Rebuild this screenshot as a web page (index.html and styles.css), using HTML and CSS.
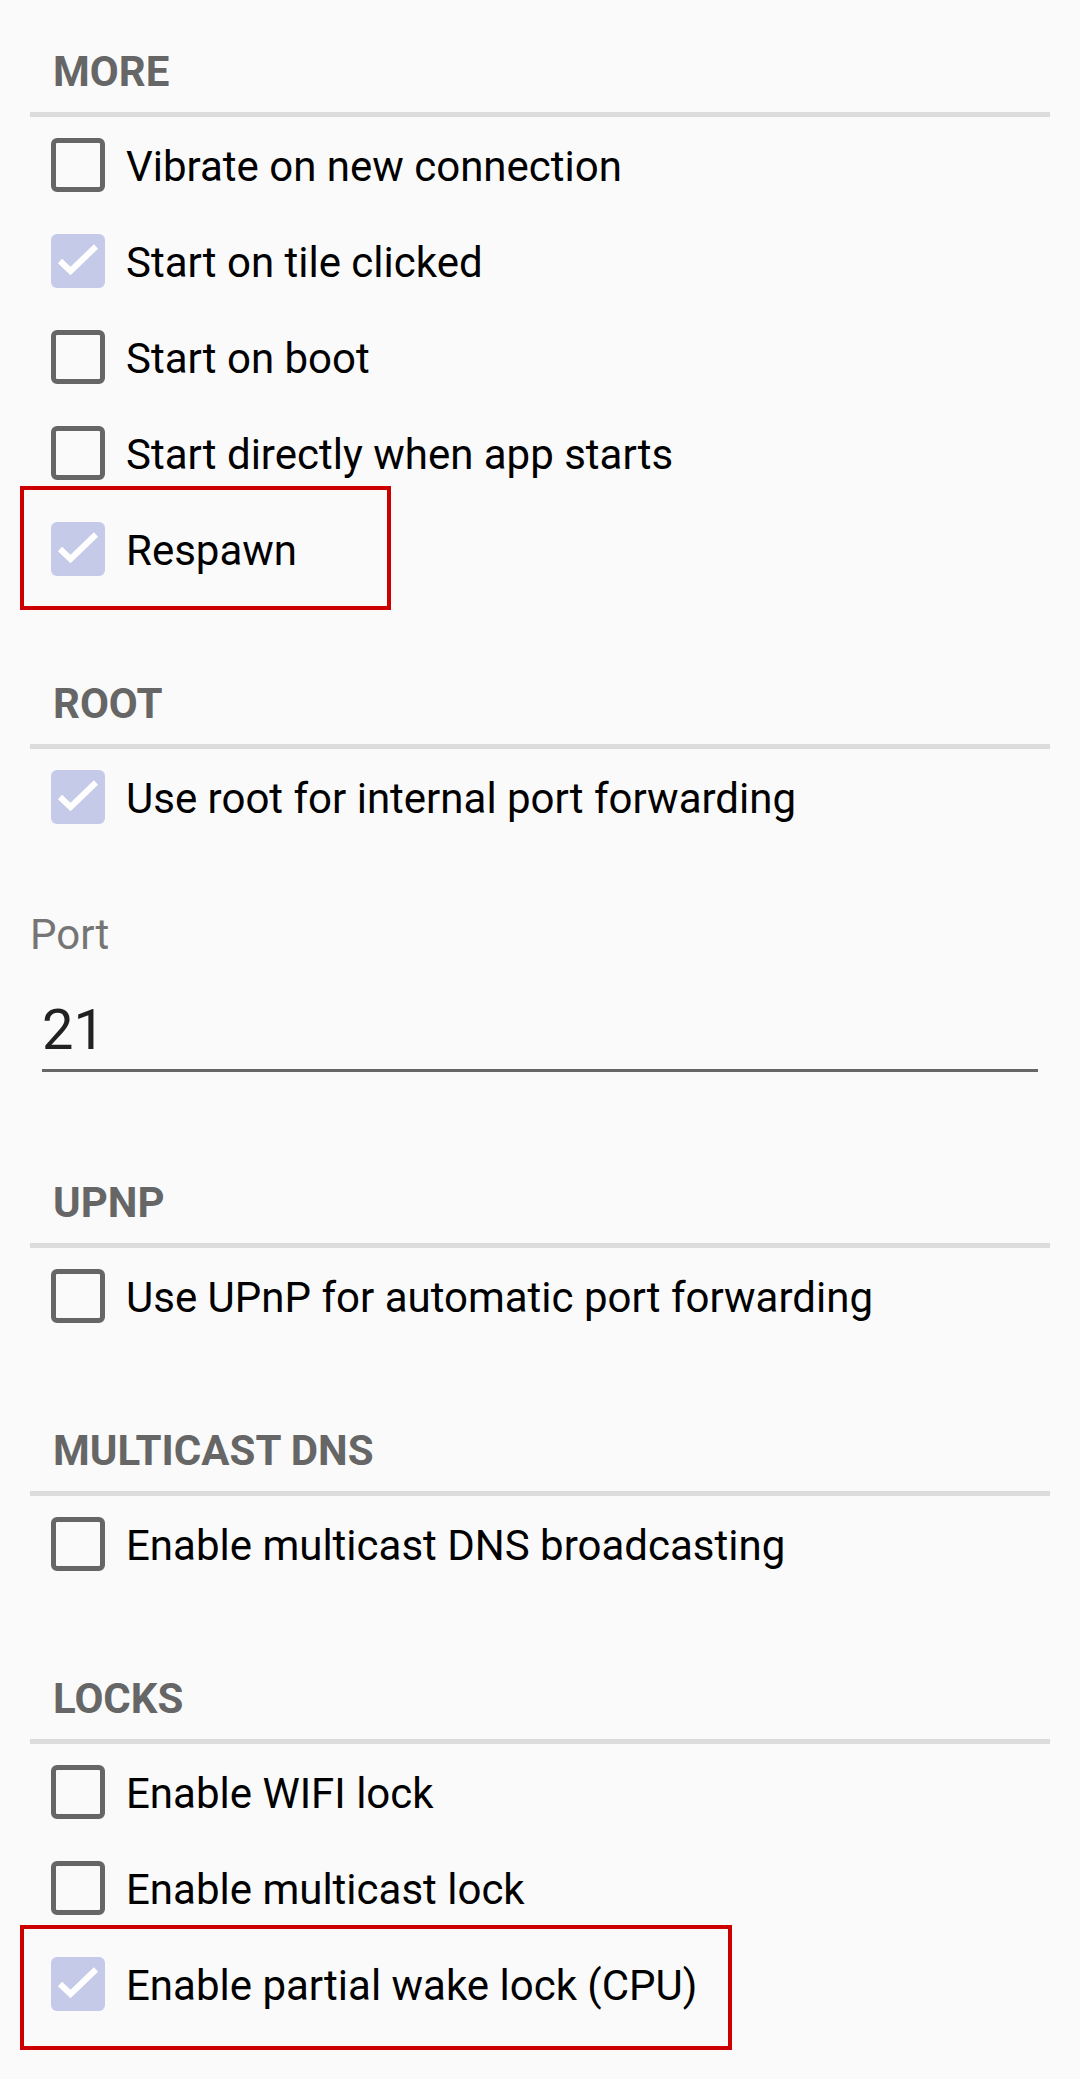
FILE: index.html
```html
<!DOCTYPE html>
<html>
<head>
<meta charset="utf-8">
<link rel="stylesheet" href="styles.css">
</head>
<body>
<div class="page">
  <section class="cat">
    <h2 class="cat-title">MORE</h2>
    <div class="row"><span class="cb"></span><span class="label">Vibrate on new connection</span></div>
    <div class="row"><span class="cb checked"><svg viewBox="0 0 54 54"><polyline points="9,27 19.5,37 45,12.5"/></svg></span><span class="label">Start on tile clicked</span></div>
    <div class="row"><span class="cb"></span><span class="label">Start on boot</span></div>
    <div class="row"><span class="cb"></span><span class="label">Start directly when app starts</span></div>
    <div class="row hl hl-respawn"><span class="cb checked"><svg viewBox="0 0 54 54"><polyline points="9,27 19.5,37 45,12.5"/></svg></span><span class="label">Respawn</span></div>
  </section>
  <section class="cat">
    <h2 class="cat-title">ROOT</h2>
    <div class="row"><span class="cb checked"><svg viewBox="0 0 54 54"><polyline points="9,27 19.5,37 45,12.5"/></svg></span><span class="label">Use root for internal port forwarding</span></div>
    <div class="field">
      <div class="field-label">Port</div>
      <div class="field-input">21</div>
    </div>
  </section>
  <section class="cat">
    <h2 class="cat-title">UPNP</h2>
    <div class="row"><span class="cb"></span><span class="label">Use UPnP for automatic port forwarding</span></div>
  </section>
  <section class="cat">
    <h2 class="cat-title">MULTICAST DNS</h2>
    <div class="row"><span class="cb"></span><span class="label">Enable multicast DNS broadcasting</span></div>
  </section>
  <section class="cat">
    <h2 class="cat-title">LOCKS</h2>
    <div class="row"><span class="cb"></span><span class="label">Enable WIFI lock</span></div>
    <div class="row"><span class="cb"></span><span class="label">Enable multicast lock</span></div>
    <div class="row hl hl-wake"><span class="cb checked"><svg viewBox="0 0 54 54"><polyline points="9,27 19.5,37 45,12.5"/></svg></span><span class="label">Enable partial wake lock (CPU)</span></div>
  </section>
</div>
</body>
</html>
```
FILE: styles.css
```css
html, body {
  margin: 0;
  padding: 0;
  background: #fafafa;
}
body {
  font-family: Roboto, "Noto Sans", sans-serif;
  color: #000;
}
.page {
  padding: 0 30px 60px;
}
.cat {
  padding-top: 85px;
}
.cat:first-child {
  padding-top: 50px;
}
.cat-title {
  margin: 0;
  padding: 0 0 19px 23px;
  font-size: 42px;
  line-height: 43px;
  font-weight: 700;
  color: #666;
  border-bottom: 5px solid #dcdcdc;
}
.row {
  position: relative;
  height: 96px;
  display: flex;
  align-items: center;
  padding-left: 21px;
}
.cb {
  flex: none;
  width: 54px;
  height: 54px;
  box-sizing: border-box;
  border: 5.5px solid #666;
  border-radius: 6px;
}
.cb.checked {
  border: none;
  background: #c5cae9;
}
.cb svg {
  display: block;
  width: 54px;
  height: 54px;
}
.cb polyline {
  fill: none;
  stroke: #fff;
  stroke-width: 6;
  stroke-linejoin: miter;
  stroke-linecap: butt;
}
.label {
  margin-left: 21px;
  padding-top: 3px;
  font-size: 42px;
  line-height: 50px;
  white-space: nowrap;
}
.hl::after {
  content: "";
  position: absolute;
  left: -10px;
  box-sizing: border-box;
  border: 4px solid #cc0000;
}
.hl-respawn::after {
  top: -15px;
  bottom: -13px;
  width: 371px;
}
.hl-wake::after {
  top: -11px;
  bottom: -18px;
  width: 712px;
}
.field {
  padding-top: 69px;
  padding-bottom: 24px;
}
.field-label {
  font-size: 42px;
  line-height: 42px;
  color: #757575;
}
.field-input {
  margin: 46px 12px 0;
  font-size: 56px;
  line-height: 56px;
  color: #212121;
  padding-bottom: 11px;
  border-bottom: 3px solid #666;
}
```
